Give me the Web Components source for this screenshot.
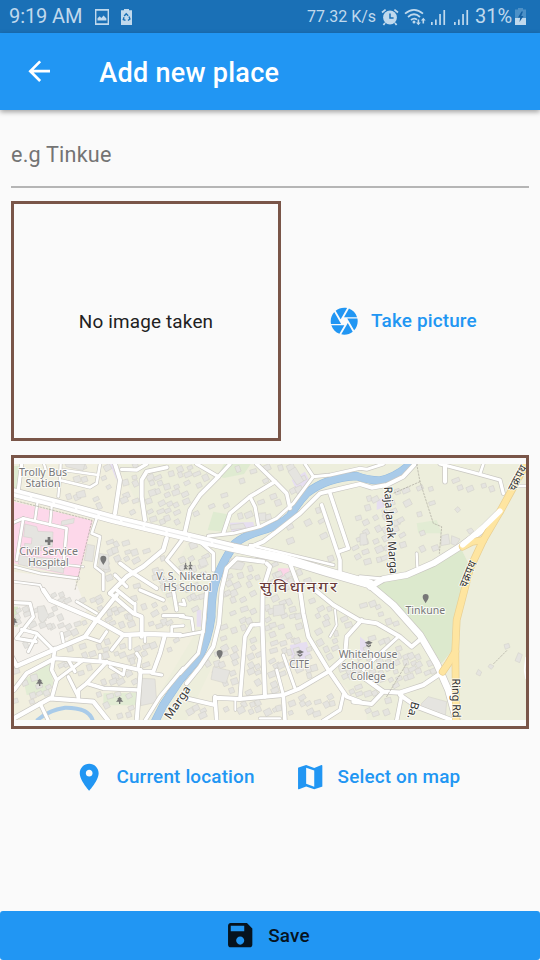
<!DOCTYPE html>
<html lang="en">
<head>
<meta charset="utf-8">
<title>Add new place</title>
<style>
html,body{margin:0;height:100%;background:#fafafa}
body{font-family:Roboto,"Noto Sans",sans-serif;overflow:hidden}
</style>
</head>
<body>
<place-screen></place-screen>
<script>
const define = (name, html, setup) => {
  const t = document.createElement('template');
  t.innerHTML = html;
  customElements.define(name, class extends HTMLElement {
    constructor() {
      super();
      this.attachShadow({mode: 'open'}).append(t.content.cloneNode(true));
    }
    connectedCallback() { if (setup) setup(this, this.shadowRoot); }
  });
};

const ICONS = {
  back: 'M20 11H7.83l5.59-5.59L12 4l-8 8 8 8 1.41-1.41L7.83 13H20v-2z',
  camera: 'M9.4 10.5l4.77-8.26C13.47 2.09 12.75 2 12 2c-2.4 0-4.6.85-6.32 2.25l3.66 6.35.06-.1zM21.54 9c-.92-2.92-3.15-5.26-6-6.34L11.88 9h9.66zm.26 1h-7.49l.29.5 4.76 8.25C21 16.97 22 14.61 22 12c0-.69-.07-1.35-.2-2zM8.54 12l-3.9-6.75C3.01 7.03 2 9.39 2 12c0 .69.07 1.35.2 2h7.49l-1.15-2zm-6.08 3c.92 2.92 3.15 5.26 6 6.34L12.12 15H2.46zm11.27 0l-3.9 6.76c.7.15 1.42.24 2.17.24 2.4 0 4.6-.85 6.32-2.25l-3.66-6.35-.93 1.6z',
  pin: 'M12 2C8.13 2 5 5.13 5 9c0 5.25 7 13 7 13s7-7.75 7-13c0-3.87-3.13-7-7-7zm0 9.5c-1.38 0-2.5-1.12-2.5-2.5s1.12-2.5 2.5-2.5 2.5 1.12 2.5 2.5-1.12 2.5-2.5 2.5z',
  map: 'M20.5 3l-.16.03L15 5.1 9 3 3.36 4.9c-.21.07-.36.25-.36.48V20.5c0 .28.22.5.5.5l.16-.03L9 18.9l6 2.1 5.64-1.9c.21-.07.36-.25.36-.48V3.5c0-.28-.22-.5-.5-.5zM15 19l-6-2.11V5l6 2.11V19z',
  save: 'M17 3H5c-1.11 0-2 .9-2 2v14c0 1.1.89 2 2 2h14c1.1 0 2-.9 2-2V7l-4-4zm-5 16c-1.66 0-3-1.34-3-3s1.34-3 3-3 3 1.34 3 3-1.34 3-3 3zm3-10H5V5h10v4z'
};
define('md-icon', `<style>:host{display:block;width:32.4px;height:32.4px;flex:none}svg{display:block;width:100%;height:100%;fill:currentColor}</style><svg viewBox="0 0 24 24"><path/></svg>`,
  (el, r) => r.querySelector('path').setAttribute('d', ICONS[el.getAttribute('name')]));

define('status-bar', `<style>
:host{display:flex;align-items:center;height:33px;background:#1a70b6;color:#c0d9ed;box-sizing:border-box;font-size:20px;line-height:35px;white-space:nowrap}
svg{display:block;flex:none;fill:currentColor}
.time{width:72px;margin-left:9px;letter-spacing:-.1px}
.img{margin-left:14px}.bat{margin-left:12px}.sp{flex:1}
.rate{font-size:16px;width:69px}
.pct{width:37px;margin-left:6px}
</style>
<span class="time">9:19 AM</span>
<svg class="img" width="14" height="16" viewBox="0 0 14 16"><path fill-rule="evenodd" d="M0 0h14v16H0zM1.400 1.700v12.600h11.200V1.700zM2.500 11.500V9.300l2.200-2 1.600 1.700 2.300-2.500 2.800 3v2z"/></svg>
<svg class="bat" width="11" height="16" viewBox="0 0 11 16"><path d="M0 1.200h3V0h5v1.200h3V16H0z"/><path d="M3.200 7l2-2.300 2 2M8 7.500l.9 2.500-1.900 1.500M4.500 11.300L2.300 10.500 3 8.300" fill="none" stroke="#1a70b6" stroke-width="1.400"/></svg>
<span class="sp"></span>
<span class="rate">77.32 K/s</span>
<svg style="margin-left:5px" width="18" height="18" viewBox="0 0 18 18"><circle cx="9" cy="9.500" r="6.900"/><path d="M1 4.500L4.600 1.600M17 4.500L13.400 1.600M4 15l-1.600 2M14 15l1.600 2" stroke="currentColor" stroke-width="1.800"/><path d="M9 5.400v4.700h3.600" fill="none" stroke="#1a70b6" stroke-width="1.500"/></svg>
<svg style="margin-left:5px" width="23" height="18" viewBox="0 0 23 18"><g fill="none" stroke="currentColor" stroke-width="1.700"><path d="M1 5.600Q10 -2 19 5.600M4 9Q10 3.500 16 9M7 12Q10 9.300 13 11.600"/></g><circle cx="10" cy="14" r="1.500"/><path d="M13.600 11.500v3h-1.600l2.400 2.700 2.400-2.700h-1.600v-3zM18.500 15.500v-3h-1.600l2.400-2.800 2.400 2.800h-1.600v3z"/></svg>
<svg style="margin-left:4px" width="15" height="16" viewBox="0 0 15 16"><path d="M0 13h1.700v3H0zM4 10.500h1.700V16H4zM8.200 5h1.700v11H8.200zM12.400 1h1.700v15h-1.700z"/></svg>
<svg style="margin-left:8px" width="15" height="16" viewBox="0 0 15 16"><path d="M0 13h1.700v3H0zM4 10.500h1.700V16H4zM8.200 5h1.700v11H8.200zM12.400 1h1.700v15h-1.700z"/></svg>
<span class="pct">31%</span>
<svg style="margin:0 14px 0 3px" width="11" height="17" viewBox="0 0 11 17"><path opacity=".3" d="M0 1.500h3V0h5v1.500h3V11H0z"/><path d="M0 10h11v7H0z"/><path d="M6.500 3.500L3 9.500h2.200L4.500 14 8.500 8H6.200L8 3.500z" fill="#1560a2"/></svg>`);

define('app-bar', `<style>
:host{display:flex;align-items:center;height:77px;padding-left:22.500px;box-sizing:border-box;background:#2196f3;color:#fff;font-size:27px;font-weight:500;letter-spacing:.27px;box-shadow:0 2px 5px rgba(0,0,0,.36);position:relative}
slot{display:block}md-icon{margin-right:44.400px}div{padding-top:3px}
</style><md-icon name="back"></md-icon><div><slot></slot></div>`);

define('text-field', `<style>
:host{display:block;height:77px;box-sizing:border-box;border-bottom:2px solid #b5b5b5;font-size:21.6px;letter-spacing:.2px;line-height:26px;padding-top:31px;color:#747474}
</style><slot></slot>`);

define('image-box', `<style>
:host{display:flex;align-items:center;justify-content:center;width:270px;height:240px;border:3px solid #795548;box-sizing:border-box;font-size:18.9px;letter-spacing:.17px;color:#212121;flex:none}
</style><slot></slot>`);

define('icon-button', `<style>
:host{display:flex;align-items:center;color:#2196f3;font-size:18.9px;font-weight:500;letter-spacing:.17px;gap:11px;line-height:24px;white-space:nowrap}
</style><md-icon></md-icon><span><slot></slot></span>`,
  (el, r) => { const old = r.querySelector('md-icon'); const n = document.createElement('md-icon'); n.setAttribute('name', el.getAttribute('icon')); old.replaceWith(n); });

/* Map geometry: units are a third of a pixel. Each road is [width, points]. */
const ROADS = [
 [10,'65,42 55,120'],[7,'132,42 137,58'],[7,'182,42 180,85 175,140'],[8,'185,92 270,112 290,100 300,42'],[7,'190,60 295,75'],
 [12,'345,42 360,90 345,190'],[10,'365,58 410,60 440,42'],[12,'500,52 440,65 425,90 425,140 435,210'],
 [7,'112,160 105,210'],[7,'155,170 150,225'],[8,'42,217 70,205 200,235 190,350'],[8,'70,205 50,330'],
 [8,'290,205 275,250 300,260 285,350 310,370 310,420'],[7,'42,350 120,370 235,385'],[5,'100,335 250,350'],[6,'42,395 120,405 130,425'],
 [13,'500,265 490,300 430,350 380,380 330,430'],[10,'545,270 500,330 545,375'],[11,'360,340 400,370 470,415'],[10,'345,375 380,410'],
 [10,'590,42 655,80 690,42'],[12,'655,80 600,135 570,180 555,245'],[11,'770,42 825,95 860,130 870,175'],
 [11,'825,95 750,140 690,190 670,250'],[10,'750,140 765,170 775,225'],[9,'915,42 940,80 990,75 1080,55 1100,58 1150,42'],
 [9,'940,80 880,160 830,205 780,230 700,250 625,258'],[12,'750,292 790,275 830,245 900,190 960,130 1080,102 1115,113 1160,105 1210,80 1245,42'],
 [11,'990,130 1045,295 1015,305'],[11,'965,165 1020,330 1020,365'],[8,'750,285 1000,345'],
 [10,'600,275 640,310 640,360'],[12,'790,335 710,325 680,355 665,420 657,520 640,590 600,650 560,700'],
 [12,'800,340 810,350 788,420 787,520 795,740'],[12,'870,340 900,420 910,490 925,560 985,660 1040,740 1080,755'],
 [13,'130,420 150,450 290,510 370,555 440,552 540,555'],[10,'42,458 90,460 100,500 65,545 50,565 108,575'],[10,'65,538 110,550 160,600'],[9,'108,560 85,605'],
 [13,'350,435 290,510 255,560 160,600 50,648 35,620'],[12,'330,430 400,490 425,500 425,560'],[11,'350,420 400,460'],
 [12,'42,720 80,670 165,625 310,635 420,660'],[11,'165,595 155,660 170,690 155,745'],
 [13,'42,805 150,745 280,755 325,812'],[12,'422,660 410,812'],[11,'320,635 260,700 235,720 235,745'],[11,'260,700 310,715 415,720'],
 [10,'205,630 225,665'],[10,'205,680 235,740'],[10,'250,630 170,690'],[12,'495,555 480,610 460,665 420,665'],[10,'410,610 420,625 415,650'],[9,'455,670 485,675'],
 [10,'120,760 145,812'],[10,'550,655 480,740 435,812'],[9,'320,545 300,575 255,560'],[10,'370,555 335,600'],[9,'185,550 190,575'],[9,'330,650 370,675 375,650'],[9,'300,615 300,635'],[9,'390,560 390,595'],[8,'230,455 290,490'],[9,'405,490 405,460'],[8,'435,560 435,575'],
 [10,'420,420 490,450'],[10,'490,497 550,497'],[10,'520,420 530,480'],[8,'550,527 515,530 515,555'],[8,'540,500 575,505 580,540'],[9,'540,558 610,545'],
 [9,'540,462 555,465 550,450'],[10,'620,420 610,540 595,610 540,670'],[11,'785,523 755,525 735,560 720,745'],
 [12,'560,745 645,765 645,743 720,747 850,735 900,715 985,665 1035,620 1040,560 1085,510'],[11,'645,740 650,812'],[11,'850,735 855,812'],[9,'830,660 850,735'],[9,'850,615 885,715'],[6,'706,750 706,780'],[7,'780,805 840,805'],
 [12,'945,420 1000,465 1080,512 1130,520 1200,560 1235,590 1265,565'],[9,'1195,560 1140,610 1090,660'],[6,'1005,480 1010,525 990,560'],
 [13,'1325,668 1270,705 1200,728 1150,725 1080,675'],[12,'1150,725 1115,762 1060,755'],[12,'1200,735 1250,770 1360,812'],[11,'1205,735 1190,812'],[10,'1030,735 1020,780 970,812'],
 [12,'1335,42 1335,95'],[10,'1320,42 1420,68 1500,90 1510,130'],[8,'1450,42 1440,72'],[7,'1545,108 1580,108'],[7,'1250,310 1252,350'],
 [20,'1105,402 1180,465 1260,555 1310,640 1345,720 1370,812'],[18,'1110,410 1150,387 1220,375 1300,340 1380,290 1440,245 1500,185'],[9,'1080,380 1150,387'],
 [26,'30,125 180,163 340,207 540,255 700,293 850,325 980,365 1110,402']
];
const BLOCKS = [ // spacing, polygon
 [30,'190,42 340,42 350,120 300,170 190,140'],[27,'365,42 555,42 640,90 570,240 440,210 370,180'],
 [38,'690,42 900,42 930,80 860,200 690,235 630,180'],[48,'900,160 960,160 1010,330 800,280'],[30,'1080,150 1210,110 1180,330 1060,350'],
 [44,'1110,130 1330,100 1320,290 1220,330'],[36,'1330,70 1490,90 1470,130 1340,110'],
 [27,'290,270 480,270 560,330 600,430 540,540 300,490'],[23,'130,425 350,440 540,560 470,660 170,600'],
 [26,'42,440 160,480 190,590 60,640'],[23,'150,620 480,640 405,720 210,730'],[24,'42,650 150,650 150,740 42,800'],
 [29,'290,730 480,700 430,800 320,800'],[27,'660,430 780,420 780,745 610,700'],[25,'790,420 910,440 980,660 800,740'],
 [30,'570,280 640,320 600,480 540,510'],[28,'690,340 860,340 880,430 680,430'],[23,'930,450 1090,500 1030,600 970,640'],
 [23,'1000,670 1130,540 1270,610 1310,660 1180,720 1060,745'],[23,'570,760 850,750 850,800 560,800'],[24,'870,740 1020,730 970,800 870,800'],
 [26,'1080,435 1130,450 1220,550 1090,510'],[30,'1100,760 1190,745 1190,800 1090,800'],[28,'800,360 950,360 930,400 810,400']
];
const pts = s => s.split(' ').map(p => p.split(',').map(Number));
const inside = (x, y, poly) => {
  let c = false;
  for (let i = 0, j = poly.length - 1; i < poly.length; j = i++) {
    const [a, b] = poly[i], [d, e] = poly[j];
    if ((b > y) !== (e > y) && x < (d - a) * (y - b) / (e - b) + a) c = !c;
  }
  return c;
};
const roadPts = ROADS.map(r => [r[0], pts(r[1])]);
const nearRoad = (x, y, m) => roadPts.some(([w, p]) => {
  for (let i = 1; i < p.length; i++) {
    const [a, b] = p[i-1], dx = p[i][0]-a, dy = p[i][1]-b;
    const t = Math.max(0, Math.min(1, ((x-a)*dx+(y-b)*dy)/(dx*dx+dy*dy)));
    if (Math.hypot(x-a-t*dx, y-b-t*dy) < w/2 + m) return true;
  }
  return false;
});
let seed = 41;
const rnd = () => (seed = (seed * 16807) % 2147483647) / 2147483647;
const houses = () => {
  let out = '';
  for (const [step, s] of BLOCKS) {
    const poly = pts(s), xs = poly.map(p => p[0]), ys = poly.map(p => p[1]);
    for (let y = Math.min(...ys); y < Math.max(...ys); y += step)
      for (let x = Math.min(...xs); x < Math.max(...xs); x += step) {
        const cx = x + rnd()*step*.6, cy = y + rnd()*step*.6;
        const w = 13 + rnd()*10, h = 11 + rnd()*8, a = -30 + rnd()*15;
        if (rnd() < .14 || !inside(cx, cy, poly) || nearRoad(cx, cy, 7)) continue;
        out += `<rect x="${(-w/2).toFixed(1)}" y="${(-h/2).toFixed(1)}" width="${w.toFixed(1)}" height="${h.toFixed(1)}" transform="translate(${cx.toFixed(1)} ${cy.toFixed(1)}) rotate(${a.toFixed(0)})"/>`;
      }
  }
  return out;
};
const line = (p, w, c, x='') => `<polyline points="${p}" stroke="${c}" stroke-width="${w}" ${x}/>`;
const RIVER = 'M1242 30Q1200 78 1140 92Q1100 90 1070 78Q980 82 920 130Q895 155 870 198Q840 225 800 237Q735 255 705 280Q665 340 650 385Q633 430 634 500Q625 570 595 625L540 690L490 765L465 815';
const RING = ['1590,20 1530,130 1500,185 1450,270 1410,355 1392,425 1370,510 1366,600 1368,815','1450,270 1415,276 1388,290','1366,605 1345,640 1328,665'];
const TREE = 'M0-12l8 8H4l7 7H2v7h-4V3h-9l7-7h-4z';
const PIN = 'M0 15C-4 7-9 3-9-4A9 9 0 0 1 9-4C9 3 4 7 0 15z';
const CAP = 'M-12-3L0-9 12-3 0 3zM-7 2L0 6 7 2V7L0 11-7 7z';
const T = (x, y, w, t, extra='') => `<text x="${x}" y="${y+1}" textLength="${w}" lengthAdjust="spacingAndGlyphs" ${extra}>${t}</text>`;
const R = (x, y, w, a, t, extra='') => `<text transform="translate(${x} ${y}) rotate(${a})" textLength="${w}" lengthAdjust="spacingAndGlyphs" class="road" ${extra}>${t}</text>`;

define('street-map', `<style>
:host{display:block;width:512px;height:256px}
svg{display:block;width:100%;height:100%}
text{font-family:"Noto Sans","Noto Sans Devanagari",sans-serif;font-size:31px;fill:#777;text-anchor:middle;paint-order:stroke;stroke:#fff;stroke-opacity:.8;stroke-width:6px;stroke-linejoin:round}
.road{fill:#333;font-size:34px}.area{fill:#693a3a;font-size:43px;letter-spacing:5px}.np .road{font-size:36px;letter-spacing:2px}
polyline{fill:none;stroke-linejoin:round;stroke-linecap:round}
</style><svg viewBox="42 42 1536 768"></svg>`, (el, r) => {
  r.querySelector('svg').innerHTML = `
  <rect x="42" y="42" width="1536" height="768" fill="#edeedc"/>
  <path d="M42 42H350L440 210 570 270 480 420 580 560 430 810H42z" fill="#f1efdf"/>
  <path d="M660 600L900 560 1100 780V810H560z" fill="#f1efdf"/>
  <path d="M42 365L225 390 260 480 190 590 42 660z" fill="#f5f2ed"/>
  <path d="M42 155L278 212 235 383 42 340z" fill="#fdd8ea"/>
  <path d="M42 48h16v70H42zM672 42h80l-20 30-60 12-20-6zM640 185l55 10-22 50-50-5z" fill="#dfebd1"/>
  <path d="M1115 397L1290 348 1385 300 1405 340 1372 500 1365 590 1325 640 1270 555 1180 460z" fill="#dce9cd"/>
  <path d="M1250 220l60-10 15 40-70 0zM310 730l100-2v38H310zM70 690l80-50 10 60-20 35-60 0z" fill="#e2ecd4"/>
  <path d="M42 470h12v60H42z" fill="#d8e8c8"/>
  <path d="M875 90l40-25 15 30-40 25zM690 218l70-2 5 25-70 8zM330 42h20v50zM870 585l50-10 15 50-60 5zM1130 150l25-10v30l-25 10zM590 480h14v50h-14zM1080 560l25 20-25 40z" fill="#e6def0"/>
  <path d="M834 355h34v40h-34z" fill="#fcd5e8"/>
  <g fill="none" stroke="#a9cbe9" stroke-linejoin="round"><path d="${RIVER}" stroke="#91b9df" stroke-width="25"/><path d="${RIVER}" stroke-width="22"/><path d="M110 812Q145 780 195 773 270 772 279 815" stroke-width="12"/></g>
  <g fill="#e5e4e0" stroke="#d2d0ca" stroke-width="1.6">${houses()}
   <path d="M75 222l35 8 4 14 45 2-2 45-35-4 2 15-50-8 0-14 20 2 2-18-25-4zM58 315l45 10-3 28-45-10zM100 320l95 10-5 40-90-20zM262 283l22 4-6 48-25-4zM298 310l28 5v45l-30-5zM185 213l38-8-2 14-38 8zM228 128l25-8 5 20-25 4zM195 42l60 0-6 20-50-12zM864 65l22-14 25 42-20 12zM775 190l22-2v24h-22zM690 225l40-5 8 14-45 5zM595 330l20-8 10 22-23 8zM1325 257l20-5 5 30-27 5zM1355 257l25 10-12 20-15-6zM1080 252l18-4 5 35-23 3zM112 470l20-3 14 30-18 22-12-12zM690 325l45 15-10 20-40-5zM640 650l50 12-12 38-45-12zM820 467l30-4 5 30-35 6zM425 685l40 2 5 70-48 10zM1265 760l20-20 55 15-4 45-80-20zM1512 584l14-4 4 12-14 6zM1555 608l12 6-8 24-14-6zM1470 642l12 6-8 10-10-8zM1435 658l10 8-5 12-12-6zM1400 240l14-6 8 10-14 8zM1364 178l10-8 8 10-10 8z"/></g>
  <g>${ROADS.map(([w,p]) => line(p, w+4, '#c9c7c2')).join('')}</g>
  <g>${ROADS.map(([w,p]) => line(p, w, '#fff')).join('')}</g>
  ${line('30,125 180,163 340,207 540,255 700,293',1.5,'#cfcfcf','stroke-dasharray="60 10"')}
  ${['42,151 276,211 225,420','1250,42 1260,95 1300,220 1325,230 1318,310','1260,95 1180,130','1160,740 1220,640','1520,602 1480,642'].map(p=>line(p,2,'#a9a69c','stroke-dasharray="5 5"')).join('')}
  ${RING.map(p=>line(p,23,'#e9cf91')).join('')}
  ${RING.map(p=>line(p,19,'#fee5a0')).join('')}
  ${line('1500,183 1450,232 1388,285',16,'#fff')}
  ${line('1578,623 1574,660 1578,685',5,'#fff')}
  <g fill="#777"><path d="M143 261h8v8h8v8h-8v8h-8v-8h-8v-8h8z"/>
   <path transform="translate(310 330)" d="${PIN}"/><path transform="translate(659 613)" d="${PIN}"/><path transform="translate(1277 445)" d="${PIN}"/>
   <path transform="translate(119 698)" d="${TREE}"/><path transform="translate(359 752)" d="${TREE}"/><path transform="translate(42 515)" d="${TREE}"/>
   <path transform="translate(900 609)" d="${CAP}"/><path transform="translate(1106 581)" d="${CAP}"/>
   </g><path d="M557 338v7M571 336v6M552 349l5-3 6 4M557 346l-1 6-4 6M557 352l5 6M566 349l5-5 6 4M571 344v8l-4 6M571 352l5 6" fill="none" stroke="#777" stroke-width="3.200"/>
  ${T(129,78,144,'Trolly Bus')}${T(129,109,105,'Station')}
  ${T(146,315,176,'Civil Service')}${T(145,347,122,'Hospital')}
  ${T(562,390,186,'V. S. Niketan')}${T(562,422,144,'HS School')}
  ${T(1276,490,119,'Tinkune')}${T(898,653,60,'CITE')}
  ${T(1104,624,176,'Whitehouse')}${T(1104,657,161,'school and')}${T(1104,690,106,'College')}
  ${T(898,426,238,'सुविधानगर','class="area"')}
  ${R(1171,241,262,86,'Raja Janak Marga','dy="10"')}
  ${R(1368,744,118,89,'Ring Rd','dy="11"')}
  ${R(534,758,112,-56,'Marga','dy="10"')}
  ${R(1236,780,52,105,'Ba.','dy="8"')}
  <g class="np">${R(1554,84,84,-62,'चक्रपथ','dy="11"')}
  ${R(1405,372,84,-68,'चक्रपथ','dy="11"')}</g>`;
});

define('map-box', `<style>
:host{display:flex;align-items:center;justify-content:center;height:274px;border:3px solid #795548;box-sizing:border-box}
</style><slot></slot>`);

define('save-bar', `<style>
:host{display:flex;align-items:center;justify-content:center;gap:11.500px;height:49px;background:#2196f3;border-radius:3px;color:#06131e;font-size:18.9px;font-weight:500;letter-spacing:.17px;box-sizing:border-box;padding-right:4px}
span{padding-right:2px}
</style><md-icon name="save"></md-icon><span><slot></slot></span>`);

define('place-screen', `<style>
:host{display:flex;flex-direction:column;width:540px;height:960px;background:#fafafa}
main{flex:1;padding:1px 11px 0;display:flex;flex-direction:column}
.photo{display:flex;margin-top:13px}
.take{flex:1;display:flex;justify-content:center;padding:0 5.500px 0 0}
map-box{margin-top:14px}
.actions{display:flex;margin:31.500px 0 0 62px;gap:39.500px}
</style>
<status-bar></status-bar>
<app-bar>Add new place</app-bar>
<main>
<text-field>e.g Tinkue</text-field>
<div class="photo"><image-box>No image taken</image-box><div class="take"><icon-button icon="camera">Take picture</icon-button></div></div>
<map-box><street-map></street-map></map-box>
<div class="actions"><icon-button icon="pin">Current location</icon-button><icon-button icon="map">Select on map</icon-button></div>
</main>
<save-bar>Save</save-bar>`);
</script>
</body>
</html>
